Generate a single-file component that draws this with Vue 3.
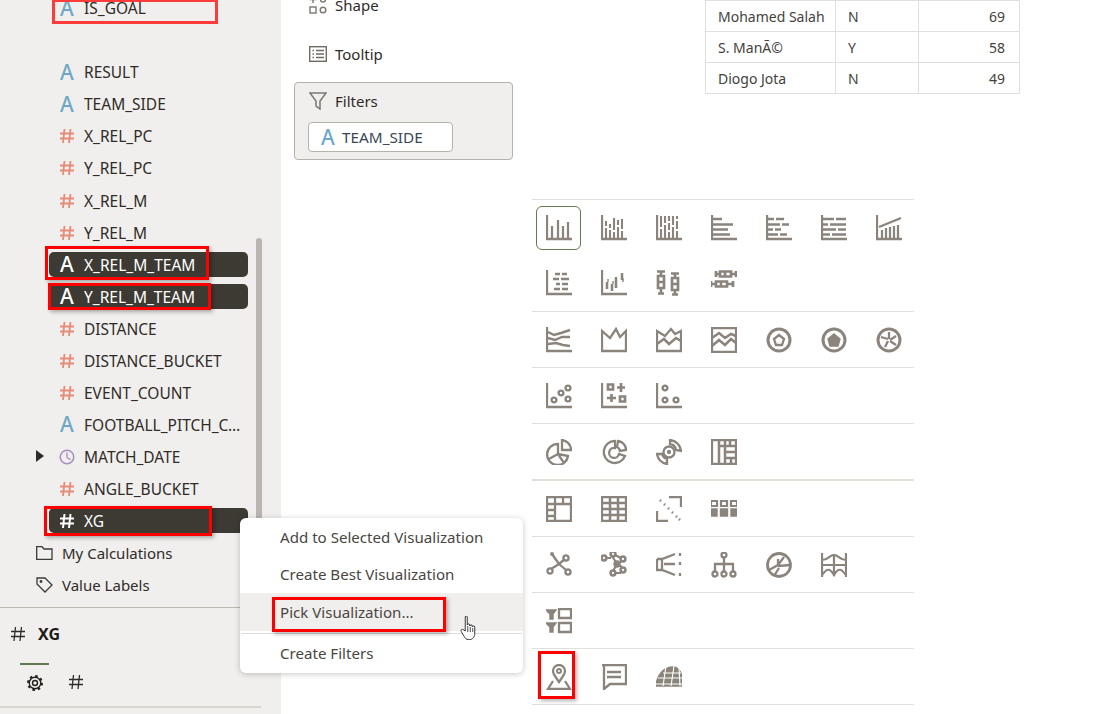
<script setup>
const c = (x, y, r) => `M${x - r} ${y}a${r} ${r} 0 1 0 ${2 * r} 0a${r} ${r} 0 1 0 ${-2 * r} 0Z`
const AX = ['M1 0V24H26', 2]
const RECT = ['M1 1H25V25H1Z', 2]

const sections = [
  [
    [AX, ['M6 23V11M12 23V5M17 23V11M22 23V7', 1.6]],
    [AX, ['M5 23V13M5 11V6M9 23V15M9 13V9M13 23V17M13 15V3M17 23V12M17 10V5M21 23V16M21 14V4', 1.5]],
    [AX, ['M5 23V14M5 12V1M9 23V10M9 8V1M13 23V17M13 15V8M13 6V1M17 23V12M17 10V1M21 23V16M21 14V6M21 4V1', 1.5]],
    [AX, ['M2 4H11M2 9.5H22M2 14.5H17M2 19.5H19', 1.7]],
    [AX, ['M2 4H8M10 4H18M2 9.5H14M16 9.5H23M2 14.5H7M9 14.5H15M2 19.5H12M14 19.5H21', 1.7]],
    [AX, ['M2 4H13M15 4H25M2 9.5H7M9 9.5H25M2 14.5H15M17 14.5H25M2 19.5H9M11 19.5H25', 1.7]],
    [AX, ['M6 23V15M10 23V13M14 23V12M18 23V11M22 23V10', 1.6], ['M3 12L25 3', 2]],
    [AX, ['M9 4H14M16 4H21M7 9H13M15 9H23M10 14H14M16 14H22M8 19H14M16 19H22', 1.8]],
    [AX, ['M6 19V12M11 21V14M15 18V7M21 10V3', 2.2], ['M7 9V12M12 11V14M22 8V12', 1]],
    [['M1 1.5H9M5 1.5V6M2 6H8V18H2ZM5 18V23M2 23.5H8M2 12H8', 1.9], ['M15 3.5H23M19 3.5V8M16 8H22V20H16ZM19 20V24M16 24.5H22M16 14H22', 1.9]],
    [['M5 1V7M5 4H9M9 1.5H20V6.5H9ZM20 4H25M25 1V7M14 1.5V6.5', 1.9], ['M0 11V17M0 14H5M5 11.5H16V16.5H5ZM16 14H22M22 11V17M10 11.5V16.5', 1.9]],
  ],
  [
    [AX, ['M2 5L8 8L15 6L24 3M2 11L9 13L16 10L24 10M2 17L10 16L17 18L24 19', 1.7]],
    [['M1 24V4L9 11L15 2L19 10L25 4V24Z', 2]],
    [['M1 24V4L9 9L15 2L19 7L25 4V24Z', 2], ['M1 17L8 12L13 17L20 11L25 14', 1.8]],
    [RECT, ['M1 11L8 6L14 11L20 7L25 9M1 19L8 13L14 18L20 12L25 16', 1.8]],
    [[c(13, 13, 11), 2.6], ['M13 8L18 12L16 18H10L8 12Z', 2]],
    [[c(13, 13, 11), 2.6], ['M13 7L19 12L17 19H9L7 12Z', 1, 1]],
    [[c(13, 13, 11), 2.6], ['M13 12V5M14 13L20 9M14 14L20 18M12 14L9 20M12 12L5 10', 2]],
  ],
  [
    [AX, [c(8, 17, 2.4), 1.7], [c(15, 10, 2.4), 1.7], [c(22, 5, 2.4), 1.7], [c(22, 16, 2.4), 1.7]],
    [AX, ['M7 1.5h5v5h-5zM20 0v9M16 4.5h8M6 15h9M10.5 11v8M19 13.5h5v5h-5z', 1.9]],
    [AX, [c(9, 5, 2.4), 1.7], [c(9, 17, 2.4), 1.7], [c(20, 17, 2.4), 1.7]],
  ],
  [
    [['M16 1V11H25A10 10 0 0 0 16 1Z', 2], ['M12 5A10.5 10.5 0 1 0 22 17L12 15ZM12 15L3 20M12 15L18 24', 2]],
    [['M14 2A11 11 0 1 0 24 17L18 15A5 5 0 1 1 14 9Z', 2], ['M17 2A9 9 0 0 1 25 11L19 12A5 5 0 0 0 16 8Z', 2]],
    [[c(13, 13, 5.5), 2], [c(13, 13, 1), 2], ['M14 1A12 12 0 0 1 25 12L20 11A7 7 0 0 0 14 5ZM1 15A12 12 0 0 0 11 25L11 20A7 7 0 0 1 6 15Z', 2]],
    [RECT, ['M8 1V25M14 1V25M8 7H25M19 1V7M14 13H25M14 19H25M20 19V25', 1.8]],
  ],
  [
    [RECT, ['M1 8H25M9 1V25M17 1V8M1 14H9M1 20H9', 2]],
    [RECT, ['M1 7H25M1 13H25M1 19H25M9 1V25M17 1V25', 1.8]],
    [['M13 1H25V11M12 25H1V15', 2], ['M4 4L5 5M8 8L9 9M12 12L13 13M16 16L17 17M20 20L21 21M23 23L24 24', 1.8]],
    [['M0 5h6v5h-6zM10 5h6v5h-6zM20 5h6v5h-6z', 1.6], ['M-1 13h7v7h-7zM9.500 13h7v7h-7zM20 13h7v7h-7z', 1, 1]],
  ],
  [
    [['M6 2L13 12L19 7M13 12L5 17M13 12L20 18', 2], [c(20, 6, 2.6), 2], [c(4, 19, 2.6), 2], [c(22, 20, 2.6), 2], [c(6, 2, 0.8), 2]],
    [['M5 6H10M14 3L20 6M11 4L16 12L12 19M16 12L21 15M21 9L18 11M14 21H20', 1.5], [c(3, 6, 2.4), 1.8], [c(12, 2, 2.4), 1.8], [c(22, 7, 2.4), 1.8], [c(12, 21, 2.4), 1.8], [c(22, 18, 2.4), 1.8], [c(16, 12, 2.4), 1.8]],
    [['M1 7V18H6L19 23M1 7H6L19 2M6 7V18M8 12L19 12', 2], ['M24 1v3M24 10v3M24 21v3', 2]],
    [[c(13, 3, 2.5), 2], ['M13 6V12M4 19V12H22V19M13 12V19', 2], [c(4, 22, 2.5), 2], [c(13, 22, 2.5), 2], [c(22, 22, 2.5), 2]],
    [[c(13, 13, 11.5), 2.4], ['M3 18L12 13L18 5M12 13L12 7M12 14L24 13M8 24L13 16', 2]],
    [['M1 1V25M25 1V25M13 2V24M1 8C8 8 8 3 13 3C18 3 18 8 25 8M1 13H25M1 23C6 16 9 16 13 23C17 16 20 16 25 23', 1.6]],
  ],
  [
    [['M0 2H10L7 6V11H4V6Z', 1, 1], ['M0 15H10L7 19V24H4V19Z', 1, 1], ['M13 1H25V10H13ZM13 15H25V24H13Z', 2]],
  ],
  [
    [['M13 18C9 12 7 10 7 7A6 6 0 0 1 19 7C19 10 17 12 13 18Z', 2], [c(13, 7, 2), 1.4], ['M7 17L2 25H24L19 17', 2]],
    [['M1 1H25V20H9L3 25V1Z', 2], ['M6 8H20M6 13H20', 2]],
    [['M0 20C2 9 9 3 17 3C23 3 27 10 27 20V22H0Z', 1, 1], ['M-1 20H28M2 14H27M7 9H25M10 2L7 22M18 2L15 22M23 3L24 22', 0.8, 0, '#fff']],
  ],
]

const fields = [
  { name: 'IS_GOAL', t: 'a' },
  { blank: true },
  { name: 'RESULT', t: 'a' },
  { name: 'TEAM_SIDE', t: 'a' },
  { name: 'X_REL_PC', t: 'n' },
  { name: 'Y_REL_PC', t: 'n' },
  { name: 'X_REL_M', t: 'n' },
  { name: 'Y_REL_M', t: 'n' },
  { name: 'X_REL_M_TEAM', t: 'a', sel: true },
  { name: 'Y_REL_M_TEAM', t: 'a', sel: true },
  { name: 'DISTANCE', t: 'n' },
  { name: 'DISTANCE_BUCKET', t: 'n' },
  { name: 'EVENT_COUNT', t: 'n' },
  { name: 'FOOTBALL_PITCH_COORDINATES', t: 'a' },
  { name: 'MATCH_DATE', t: 'd' },
  { name: 'ANGLE_BUCKET', t: 'n' },
  { name: 'XG', t: 'n', sel: true },
]

const rows = [
  ['Mohamed Salah', 'N', 69],
  ['S. ManÃ©'.replace('é', '©'), 'Y', 58],
  ['Diogo Jota', 'N', 49],
]
const HASH = 'M5.5 1L4 15M11.500 1L10 15M1 5.500H15M1 10.500H15'
const weight = (w) => (w < 2 ? w * 1.4 : w * 1.15)
</script>

<template>
  <div class="page">
    <aside class="side">
      <div class="list">
        <template v-for="(f, i) in fields" :key="i">
          <div v-if="f.blank" class="row"></div>
          <div v-else class="row" :class="{ sel: f.sel }">
            <div class="pill">
              <svg v-if="f.t === 'd'" class="twisty" width="8" height="12" viewBox="0 0 8 12"><path d="M0 0L8 6L0 12Z" fill="#2f2c28" /></svg>
              <span v-if="f.t === 'a'" class="ic-a">A</span>
              <svg v-else-if="f.t === 'n'" class="ic" width="16" height="16" viewBox="0 0 16 16"><path :d="HASH" fill="none" :stroke="f.sel ? '#fff' : '#e58b78'" :stroke-width="f.sel ? 2 : 1.8" /></svg>
              <svg v-else class="ic" width="18" height="18" viewBox="0 0 18 18" fill="none" stroke="#a78fbd"><circle cx="9" cy="9" r="7.6" stroke-width="1.7" /><path d="M9 4V9.500L13 12" stroke-width="1.5" /></svg>
              <span class="name">{{ f.name }}</span>
            </div>
          </div>
        </template>
        <div class="row folder">
          <svg width="17" height="14" viewBox="0 0 17 14" fill="none" stroke="#3d3a36" stroke-width="1.3"><path d="M.7.700H6L8 3H16V13.300H.7Z" /></svg>
          <span>My Calculations</span>
        </div>
        <div class="row folder">
          <svg width="17" height="16" viewBox="0 0 17 16" fill="none" stroke="#3d3a36" stroke-width="1.3"><path d="M1 1H9L16 8L9 15L1 7Z" /><circle cx="5" cy="4.500" r=".8" /></svg>
          <span>Value Labels</span>
        </div>
      </div>
      <div class="detail">
        <div class="d-head">
          <svg width="16" height="16" viewBox="0 0 16 16"><path :d="HASH" fill="none" stroke="#2f2c28" stroke-width="1.3" /></svg>
          <strong>XG</strong>
        </div>
        <div class="d-tabs">
          <div class="d-tab on">
            <svg width="18" height="18" viewBox="0 0 18 18" fill="none" stroke="#23201c"><circle cx="9" cy="9" r="2.500" stroke-width="1.400" /><circle cx="9" cy="9" r="5.800" stroke-width="1.400" /><circle cx="9" cy="9" r="7" stroke-width="2" stroke-dasharray="2.500 3" /></svg>
          </div>
          <div class="d-tab">
            <svg width="16" height="16" viewBox="0 0 16 16"><path :d="HASH" fill="none" stroke="#2f2c28" stroke-width="1.300" /></svg>
          </div>
        </div>
      </div>
      <div class="thumb"></div>
    </aside>

    <main class="main">
      <div class="top">
        <section class="grammar">
          <div class="g-row">
            <svg width="18" height="18" viewBox="0 0 18 18" fill="none" stroke="#7d7770" stroke-width="1.400"><path d="M4 0V7M.5 3.500H7.500" /><circle cx="14" cy="3.500" r="2.500" /><rect x="1" y="11" width="6" height="6" /><circle cx="14" cy="14" r="2.800" /></svg>
            <span>Shape</span>
          </div>
          <div class="g-row">
            <svg width="18" height="16" viewBox="0 0 18 16" fill="none" stroke="#6f6a63" stroke-width="1.400"><rect x=".7" y=".7" width="16.600" height="14.600" /><path d="M3.500 4.500H5M7 4.500H15M3.500 8H5M7 8H15M3.500 11.500H5M7 11.500H15" /></svg>
            <span>Tooltip</span>
          </div>
          <div class="filters">
            <div class="f-head">
              <svg width="18" height="18" viewBox="0 0 18 18" fill="none" stroke="#7d7770" stroke-width="1.500"><path d="M1 1H17L11 9V17L7 14V9Z" /></svg>
              <span>Filters</span>
            </div>
            <div class="chip"><span class="ic-a">A</span><span class="chip-t">TEAM_SIDE</span></div>
          </div>
        </section>
        <table class="tbl">
          <colgroup><col class="c1" /><col class="c2" /><col class="c3" /></colgroup>
          <tbody>
            <tr v-for="r in rows" :key="r[0]">
              <td>{{ r[0] }}</td>
              <td class="mid">{{ r[1] }}</td>
              <td class="num">{{ r[2] }}</td>
            </tr>
          </tbody>
        </table>
      </div>

      <div class="picker">
        <div v-for="(sec, si) in sections" :key="si" class="sec" :class="{ heavy: si === 4, first: si === 0 }">
          <div v-for="(icon, ii) in sec" :key="ii" class="cell" :class="{ active: si === 0 && ii === 0 }">
            <svg width="26" height="26" viewBox="0 0 26 26">
              <path v-for="(p, pi) in icon" :key="pi" :d="p[0]" :stroke-width="weight(p[1])"
                :fill="p[2] ? '#8a847d' : 'none'" :stroke="p[3] || '#8a847d'" />
            </svg>
          </div>
        </div>
      </div>
    </main>

    <div class="menu">
      <div class="m-item">Add to Selected Visualization</div>
      <div class="m-item second">Create Best Visualization</div>
      <div class="m-item hover">Pick Visualization...</div>
      <div class="m-sep"></div>
      <div class="m-item">Create Filters</div>
    </div>

    <svg class="hand" width="18" height="25" viewBox="1 1 15.500 25">
      <path d="M6 2c0-1.500 2-1.500 2 0v8c0-1.500 2.500-1.500 2.500 0v1c0-1.500 2.500-1.500 2.500 0v1c0-1.500 2.500-1.500 2.500 0v6c0 4-2 6.500-5 6.500H9c-2 0-3-1-4-3l-3-5c-1-1.500 1-3 2.500-1.500L6 16Z" fill="#fff" stroke="#222" stroke-width=".9" />
      <path d="M8.500 11v6M11 12v5M13.500 13v4" stroke="#222" stroke-width=".8" />
    </svg>

    <div class="mark m1"></div>
    <div class="mark m2"></div>
    <div class="mark m3"></div>
    <div class="mark m4"></div>
    <div class="mark m5"></div>
    <div class="mark m6"></div>
  </div>
</template>

<style>
html, body { margin: 0; background: #fff; }
</style>

<style scoped>
.page {
  position: relative;
  display: flex;
  width: 1098px;
  height: 714px;
  overflow: hidden;
  background: #fff;
  color: #2f2c28;
  font-family: "Noto Sans", "Open Sans", sans-serif;
  font-size: 15px;
}
.side {
  position: relative;
  flex: none;
  width: 281px;
  height: 714px;
  overflow: hidden;
  background: #f0efed;
}
.list { height: 607px; margin-top: -7.8px; margin-bottom: 7.8px; }
.row { height: 32.05px; display: flex; align-items: center; padding-left: 49px; }
.pill {
  display: flex;
  align-items: center;
  position: relative;
  width: 199px;
  height: 25px;
  padding-left: 10px;
  box-sizing: border-box;
  border-radius: 5px;
}
.sel .pill { background: #3d3a34; color: #fff; }
.sel .ic-a { color: #fff; }
.ic-a {
  flex: none;
  width: 16px;
  text-align: center;
  font-size: 21px;
  font-weight: 500;
  line-height: 25px;
  color: #6fa8c6;
}
.ic { flex: none; width: 16px; }
.name {
  margin-left: 9px;
  width: 161px;
  flex: none;
  overflow: hidden;
  white-space: nowrap;
  text-overflow: ellipsis;
  font-size: 15.5px;
}
.twisty { position: absolute; left: -13px; top: 6px; }
.folder { padding-left: 36px; gap: 9px; }
.detail { border-top: 1px solid #bdb9b4; }
.d-head { display: flex; align-items: center; gap: 12px; height: 55px; box-sizing: border-box; padding: 0 0 4px 10px; }
.d-head strong { font-size: 16px; font-weight: 700; color: #1d1b18; }
.d-tabs { display: flex; padding-left: 20px; height: 43px; border-bottom: 2px solid #d8d6d0; width: 241px; }
.d-tab { width: 29px; height: 43px; box-sizing: border-box; display: flex; align-items: flex-start; justify-content: center; padding-top: 11px; margin-right: 12px; }
.d-tab.on { border-top: 2px solid #627b52; padding-top: 9px; }
.thumb {
  position: absolute;
  left: 256px;
  top: 238px;
  width: 6px;
  height: 300px;
  border-radius: 3px;
  background: #bab5b0;
}
.main { flex: none; width: 817px; }
.top { display: flex; height: 199px; }
.grammar { flex: none; width: 219px; margin-left: 13px; }
.g-row { display: flex; align-items: center; gap: 8px; height: 48px; box-sizing: border-box; padding-left: 15px; }
.g-row:first-child { margin-top: -18px; padding-bottom: 2px; }
.filters {
  margin-top: 4px;
  height: 78px;
  box-sizing: border-box;
  border: 1px solid #b5b1ab;
  border-radius: 4px;
  background: #f0efed;
  padding: 0 13px;
}
.f-head { display: flex; align-items: center; gap: 8px; height: 36px; padding-left: 1px; }
.chip {
  display: flex;
  align-items: center;
  width: 145px;
  height: 30px;
  box-sizing: border-box;
  margin-top: 3px;
  padding-left: 11px;
  border: 1px solid #b5b1ab;
  border-radius: 4px;
  background: #fff;
}
.chip-t { margin-left: 6px; color: #3b4754; font-size: 15.3px; line-height: 26px; }
.tbl {
  flex: none;
  align-self: flex-start;
  margin-left: 192px;
  width: 314px;
  table-layout: fixed;
  border-collapse: collapse;
  color: #45413c;
  font-size: 14px;
}
.c1 { width: 130px; }
.c2 { width: 83px; }
.c3 { width: 101px; }
.tbl td { height: 31px; padding: 0 14px 0 12px; border: 1px solid #dfdfdf; box-sizing: border-box; white-space: nowrap; }
.tbl .num { text-align: right; }
.picker { width: 382px; margin-left: 251px; }
.sec {
  display: grid;
  grid-template-columns: repeat(7, 55px);
  border-top: 1px solid #e1e0dd;
}
.sec.first { padding-bottom: 1px; }
.sec.heavy { border-top: 2px solid #e0dfd8; }
.sec:last-child { border-bottom: 1px solid #e1e0dd; }
.cell {
  position: relative;
  height: 55px;
  box-sizing: border-box;
  padding-left: 14px;
  display: flex;
  align-items: center;
}
.cell.active::before {
  content: "";
  position: absolute;
  left: 4px;
  top: 6px;
  width: 45px;
  height: 44px;
  box-sizing: border-box;
  border: 1px solid #5f7d4f;
  border-radius: 6px;
}
.menu {
  position: absolute;
  left: 240px;
  top: 518px;
  width: 283px;
  height: 155px;
  border-radius: 6px;
  background: #fff;
  box-shadow: 0 1px 6px rgba(0, 0, 0, .22);
  color: #4a4641;
  font-size: 15.1px;
}
.m-item { display: flex; align-items: center; height: 38px; padding-left: 40px; }
.m-item.second { height: 37px; padding-bottom: 1px; box-sizing: border-box; }
.m-item.hover { background: #f0efed; }
.m-sep { height: 1px; margin: 2px 1px 0; background: #dedcd9; }
.hand { position: absolute; left: 459px; top: 616px; }
.mark {
  position: absolute;
  box-sizing: border-box;
  border: 3px solid #f00;
  box-shadow: 2px 2px 4px rgba(0, 0, 0, .3);
}
.m1 { left: 52px; top: -1px; width: 166px; height: 25px; border-color: #fe3b3b; box-shadow: none; }
.m2 { left: 45px; top: 246px; width: 164px; height: 34px; }
.m3 { left: 48px; top: 283px; width: 163px; height: 27px; }
.m4 { left: 44px; top: 506px; width: 168px; height: 30px; }
.m5 { left: 272px; top: 597px; width: 174px; height: 35px; }
.m6 { left: 538px; top: 651px; width: 37px; height: 48px; }
</style>
